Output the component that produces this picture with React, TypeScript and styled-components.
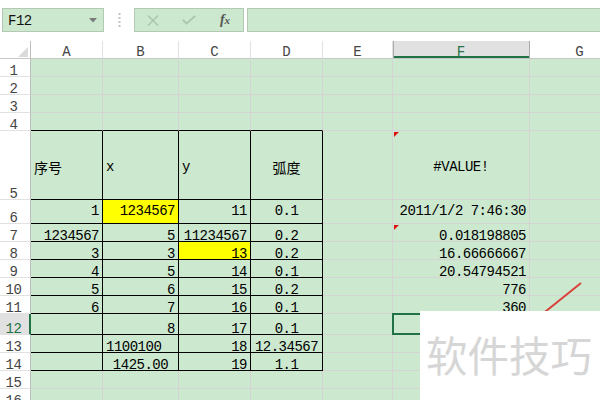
import React from 'react';
import styled, { createGlobalStyle, css } from 'styled-components';

const GREEN = '#cce8cf';
const GRID = '#d4d4d4';
const XL = '#217346';
const BLACK = '#000';

const Global = createGlobalStyle`
  html, body { margin: 0; padding: 0; background: #fff; overflow: hidden; }
  body { width: 600px; height: 400px; font-family: "Liberation Mono", "Noto Sans CJK SC", monospace; }
`;

const Page = styled.div`
  position: relative;
  width: 600px;
  height: 400px;
  overflow: hidden;
  background: #fff;
`;

/* ---------- formula bar ---------- */
const FormulaBar = styled.div`
  display: flex;
  align-items: flex-start;
  height: 41px;
  box-sizing: border-box;
  padding: 8px 0 0 2px;
`;

const GreenBox = styled.div<{ $w?: number; $grow?: boolean }>`
  box-sizing: border-box;
  height: 24px;
  ${p => (p.$w ? css`width: ${p.$w}px;` : '')}
  ${p => (p.$grow ? css`flex: 1; margin-right: -4px;` : '')}
  background: ${GREEN};
  border: 1px solid #b3c9b5;
  display: flex;
  align-items: center;
`;

const NameText = styled.span`
  padding-left: 5px;
  padding-top: 1px;
  font-size: 14px;
  letter-spacing: -0.5px;
  color: #111;
  flex: 1;
`;

const Arrow = styled.svg`
  margin-right: 6px;
`;

const Grip = styled.div`
  width: 30px;
  height: 24px;
  display: flex;
  justify-content: center;
  align-items: center;
`;

const ToolBtn = styled.div`
  width: 36px;
  height: 22px;
  display: flex;
  align-items: center;
  justify-content: center;
`;

const Fx = styled.span`
  font-family: "Liberation Serif", "DejaVu Serif", serif;
  font-style: italic;
  font-weight: bold;
  font-size: 14px;
  color: #555;
  letter-spacing: 0;
  small { font-size: 11px; }
`;

const Spacer = styled.div`
  width: 3px;
`;

/* ---------- sheet ---------- */
const COLS = [
  { k: 'A', w: 72 },
  { k: 'B', w: 76 },
  { k: 'C', w: 72 },
  { k: 'D', w: 72 },
  { k: 'E', w: 70 },
  { k: 'F', w: 137 },
  { k: 'G', w: 100 },
];
const ROW_H = [18, 18, 18, 18, 69, 24, 18, 18, 18, 18, 18, 21, 18, 18, 18, 18];

const Sheet = styled.div`
  display: grid;
  grid-template-columns: 31px ${COLS.map(c => c.w + 'px').join(' ')};
  grid-template-rows: 18px ${ROW_H.map(h => h + 'px').join(' ')};
  width: ${31 + COLS.reduce((s, c) => s + c.w, 0)}px;
`;

const Corner = styled.div`
  box-sizing: border-box;
  background: #fff;
  border-right: 1px solid #bdbdbd;
  border-bottom: 1px solid #c6c6c6;
  display: flex;
  align-items: flex-end;
  justify-content: flex-end;
  padding: 0 2px 1px 0;
`;

const ColHead = styled.div<{ $active?: boolean }>`
  box-sizing: border-box;
  background: ${p => (p.$active ? '#e1e1e1' : '#fff')};
  border-right: 1px solid ${p => (p.$active ? '#ababab' : '#e1e1e1')};
  border-bottom: 1px solid #c6c6c6;
  ${p =>
    p.$active &&
    css`
      box-shadow: inset 1px 0 0 #ababab, inset 0 -2px 0 ${XL};
    `}
  color: ${p => (p.$active ? XL : '#444')};
  display: flex;
  align-items: flex-end;
  justify-content: center;
  font-size: 14px;
  line-height: 10px;
  padding-bottom: 1px;
`;

const RowHead = styled.div<{ $active?: boolean }>`
  box-sizing: border-box;
  background: ${p => (p.$active ? '#e1e1e1' : '#fff')};
  border-right: ${p => (p.$active ? `2px solid ${XL}` : '1px solid #bdbdbd')};
  border-bottom: 1px solid #e1e1e1;
  color: ${p => (p.$active ? XL : '#444')};
  display: flex;
  align-items: flex-end;
  justify-content: center;
  padding-right: ${p => (p.$active ? 2 : 3)}px;
  font-size: 14px;
  letter-spacing: -0.5px;
  line-height: 10px;
`;

type Align = 'l' | 'c' | 'r';

const Cell = styled.div<{
  $bg?: string;
  $rb: string;
  $bb: string;
  $align: Align;
  $mid?: boolean;
  $pt?: number;
  $mark?: boolean;
  $sel?: boolean;
  $redBar?: boolean;
}>`
  position: relative;
  box-sizing: border-box;
  background: ${p => p.$bg ?? GREEN};
  border-right: 1px solid ${p => p.$rb};
  border-bottom: 1px solid ${p => p.$bb};
  display: flex;
  align-items: ${p => (p.$mid ? 'center' : 'flex-end')};
  justify-content: ${p => (p.$align === 'l' ? 'flex-start' : p.$align === 'c' ? 'center' : 'flex-end')};
  padding: ${p => p.$pt ?? 0}px 3px 0 3px;
  font-size: 14px;
  letter-spacing: -0.5px;
  line-height: ${p => (p.$mid ? 13 : 10)}px;
  white-space: nowrap;
  color: #000;
  ${p =>
    p.$mark &&
    css`
      &::before {
        content: '';
        position: absolute;
        left: 1px;
        top: 1px;
        border-top: 5px solid #e01010;
        border-right: 5px solid transparent;
      }
    `}
  ${p =>
    p.$sel &&
    css`
      &::after {
        content: '';
        position: absolute;
        left: -1px;
        top: -1px;
        right: -1px;
        bottom: -1px;
        border: 2px solid ${XL};
      }
    `}
  ${p =>
    p.$redBar &&
    css`
      &::after {
        content: '';
        position: absolute;
        right: -3px;
        top: 4px;
        width: 2px;
        height: 14px;
        background: #e0503a;
      }
    `}
`;

const CjkText = styled.span`
  font-family: "Noto Sans CJK SC", sans-serif;
  font-size: 14px;
  letter-spacing: 0;
  line-height: 16px;
`;

/* ---------- overlays ---------- */
const Drawing = styled.svg`
  position: absolute;
  left: 0;
  top: 0;
  pointer-events: none;
`;

const Watermark = styled.div`
  position: absolute;
  left: 420px;
  top: 311px;
  width: 180px;
  height: 89px;
  background: #fff;
  box-sizing: border-box;
  padding: 21px 0 0 6px;
  font-family: "Noto Sans CJK SC", sans-serif;
  font-size: 41.5px;
  line-height: 44px;
  color: #d6d6d6;
  white-space: nowrap;
`;

type C = { t?: string; a?: Align; y?: boolean; mark?: boolean; sel?: boolean; redBar?: boolean; cjk?: boolean } | null;

const DATA: Record<number, C[]> = {
  5: [
    { t: '序号', a: 'l', cjk: true },
    { t: 'x', a: 'l' },
    { t: 'y', a: 'l' },
    { t: '弧度', a: 'c', cjk: true },
    null,
    { t: '#VALUE!', a: 'c', mark: true },
    null,
  ],
  6: [{ t: '1' }, { t: '1234567', y: true }, { t: '11' }, { t: '0.1', a: 'c' }, null, { t: '2011/1/2 7:46:30' }, null],
  7: [{ t: '1234567' }, { t: '5' }, { t: '11234567' }, { t: '0.2', a: 'c' }, null, { t: '0.018198805', mark: true }, null],
  8: [{ t: '3' }, { t: '3' }, { t: '13', y: true }, { t: '0.2', a: 'c' }, null, { t: '16.66666667' }, null],
  9: [{ t: '4' }, { t: '5' }, { t: '14' }, { t: '0.1', a: 'c' }, null, { t: '20.54794521' }, null],
  10: [{ t: '5' }, { t: '6' }, { t: '15' }, { t: '0.2', a: 'c' }, null, { t: '776' }, null],
  11: [{ t: '6' }, { t: '7' }, { t: '16' }, { t: '0.1', a: 'c' }, null, { t: '360' }, null],
  12: [null, { t: '8' }, { t: '17' }, { t: '0.1', a: 'c', redBar: true }, null, { sel: true }, null],
  13: [null, { t: '1100100', a: 'l' }, { t: '18' }, { t: '12.34567', a: 'c' }, null, null, null],
  14: [null, { t: '1425.00', a: 'c' }, { t: '19' }, { t: '1.1', a: 'c' }, null, null, null],
};

const SELECTED_ROW = 12;
const SELECTED_COL = 'F';

export default function App() {
  const rows = ROW_H.map((_, i) => i + 1);
  return (
    <Page>
      <Global />
      <FormulaBar>
        <GreenBox $w={102}>
          <NameText>F12</NameText>
          <Arrow width="8" height="5" viewBox="0 0 8 5">
            <polygon points="0,0 8,0 4,4.5" fill="#7a7a7a" />
          </Arrow>
        </GreenBox>
        <Grip>
          <svg width="3" height="16" viewBox="0 0 3 16">
            {[1, 5, 9, 13].map(y => (
              <rect key={y} x="0.5" y={y} width="2" height="2" fill="#c4c4c4" />
            ))}
          </svg>
        </Grip>
        <GreenBox $w={110}>
          <ToolBtn>
            <svg width="12" height="11" viewBox="0 0 12 11">
              <path d="M1 0.5 L11 10.5 M11 0.5 L1 10.5" stroke="#a7c6aa" strokeWidth="1.4" />
            </svg>
          </ToolBtn>
          <ToolBtn>
            <svg width="14" height="10" viewBox="0 0 14 10">
              <path d="M0.8 4.8 L4.6 8.6 L13.2 0.8" stroke="#a7c6aa" strokeWidth="1.8" fill="none" />
            </svg>
          </ToolBtn>
          <ToolBtn>
            <Fx>
              f<small>x</small>
            </Fx>
          </ToolBtn>
        </GreenBox>
        <Spacer />
        <GreenBox $grow />
      </FormulaBar>

      <Sheet>
        <Corner>
          <svg width="10" height="10" viewBox="0 0 10 10">
            <polygon points="10,0 10,10 0,10" fill="#dadada" />
          </svg>
        </Corner>
        {COLS.map(c => (
          <ColHead key={c.k} $active={c.k === SELECTED_COL}>
            {c.k}
          </ColHead>
        ))}
        {rows.map(r => (
          <React.Fragment key={r}>
            <RowHead $active={r === SELECTED_ROW}>{r}</RowHead>
            {COLS.map((c, ci) => {
              const d = DATA[r]?.[ci] ?? null;
              const inTable = ci < 4 && r >= 5 && r <= 14;
              const bb = inTable || (ci < 4 && r === 4) ? BLACK : GRID;
              const rb = inTable ? BLACK : GRID;
              return (
                <Cell
                  key={c.k}
                  $bg={d?.y ? '#ffff00' : undefined}
                  $rb={rb}
                  $bb={bb}
                  $align={d?.a ?? 'r'}
                  $mid={r === 5 || r === 6}
                  $pt={r === 5 ? 4 : 0}
                  $mark={d?.mark}
                  $sel={d?.sel}
                  $redBar={d?.redBar}
                >
                  {d?.t ? d.cjk ? <CjkText>{d.t}</CjkText> : d.t : null}
                </Cell>
              );
            })}
          </React.Fragment>
        ))}
      </Sheet>

      <Drawing width="600" height="400" viewBox="0 0 600 400">
        <line x1="581" y1="283" x2="520" y2="332" stroke="#d9403a" strokeWidth="2" />
      </Drawing>

      <Watermark>软件技巧</Watermark>
    </Page>
  );
}
